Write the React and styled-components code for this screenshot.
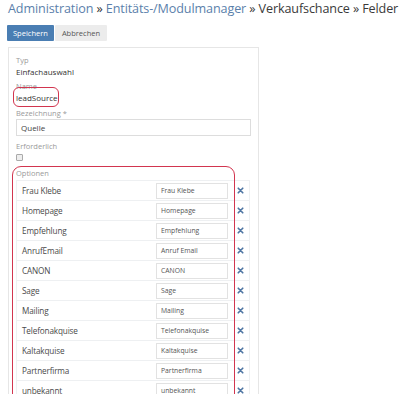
import React from "react";
import styled, { createGlobalStyle } from "styled-components";

const Global = createGlobalStyle`
  html, body { margin: 0; padding: 0; background: #fff; }
  body { font-family: "Open Sans", "Liberation Sans", sans-serif; color: #333; }
  * { box-sizing: border-box; }
`;

const Page = styled.div`
  padding: 1px 8px 0 8px;
  width: 403px;
  height: 394px;
  overflow: hidden;
`;

const Title = styled.h1`
  margin: 0;
  font-size: 12.6px;
  font-weight: 400;
  line-height: 16px;
  letter-spacing: -0.12px;
  white-space: nowrap;
`;

const Crumb = styled.span`
  color: ${(p) => (p.$link ? "#5b7fab" : "#3a3a3a")};
`;

const Toolbar = styled.div`
  display: flex;
  margin-top: 8px;
  margin-left: -1px;
`;

const Button = styled.button`
  font-family: inherit;
  font-size: 7.5px;
  height: 16px;
  padding: 0 ${(p) => (p.$primary ? "6px" : "7px")};
  border: none;
  border-radius: 1px;
  background: ${(p) => (p.$primary ? "#4a7eb3" : "#ececec")};
  color: ${(p) => (p.$primary ? "#fff" : "#555")};
  margin-right: 1px;
`;

const Panel = styled.div`
  position: relative;
  margin-top: 6px;
  width: 251px;
  height: 400px;
  border: 1px solid #e6e6e6;
  padding: 7px 7px 0 7px;
`;

const Field = styled.div`
  margin-bottom: ${(p) => p.$mb || 0}px;
`;

const Label = styled.div`
  font-size: 7.5px;
  line-height: 11px;
  color: #9a9a9a;
`;

const Value = styled.div`
  font-size: 8px;
  line-height: 11px;
  color: #333;
`;

const TextInput = styled.div`
  height: 17px;
  border: 1px solid #ddd;
  font-size: 8px;
  line-height: 15px;
  padding-left: 4px;
  color: #444;
  width: 235px;
`;

const Check = styled.div`
  width: 7px;
  height: 7px;
  border: 1px solid #aaa;
  background: #eee;
  border-radius: 1px;
  margin-top: 2px;
`;

const Table = styled.div`
  display: grid;
  grid-template-columns: 137px 78px 19px;
  width: 234px;
  margin-top: 1px;
`;

const Cell = styled.div`
  height: 20px;
  border-top: 1px solid #eef0f2;
  display: flex;
  align-items: center;
  justify-content: ${(p) => (p.$center ? "center" : "flex-start")};
  padding-left: ${(p) => (p.$pad ? 5 : 0)}px;
  font-size: 8.2px;
  letter-spacing: -0.15px;
  color: #4a4a4a;
  border-right: ${(p) => (p.$edge ? "1px solid #eef0f2" : "none")};
  border-left: ${(p) => (p.$first ? "1px solid #eef0f2" : "none")};
`;

const OptInput = styled.div`
  width: 72px;
  height: 16px;
  margin-left: 3px;
  border: 1px solid #e2e2e2;
  font-size: 6.8px;
  line-height: 14px;
  padding-left: 4px;
  letter-spacing: 0;
  color: #555;
`;

const Remove = styled.svg`
  width: 7px;
  height: 7px;
  margin-left: 1px;
`;

const Mark = styled.div`
  position: absolute;
  border: 1.3px solid #d2354f;
  border-radius: ${(p) => p.$r}px;
  left: ${(p) => p.$x}px;
  top: ${(p) => p.$y}px;
  width: ${(p) => p.$w}px;
  height: ${(p) => p.$h}px;
  pointer-events: none;
`;

const options = [
  ["Frau Klebe", "Frau Klebe"],
  ["Homepage", "Homepage"],
  ["Empfehlung", "Empfehlung"],
  ["AnrufEmail", "Anruf Email"],
  ["CANON", "CANON"],
  ["Sage", "Sage"],
  ["Mailing", "Mailing"],
  ["Telefonakquise", "Telefonakquise"],
  ["Kaltakquise", "Kaltakquise"],
  ["Partnerfirma", "Partnerfirma"],
  ["unbekannt", "unbekannt"],
];

const X = () => (
  <Remove viewBox="0 0 10 10">
    <path d="M1.8 1.8 L8.2 8.2 M8.2 1.8 L1.8 8.2" stroke="#4f76a3" strokeWidth="2.4" strokeLinecap="round" />
  </Remove>
);

export default function App() {
  return (
    <>
      <Global />
      <Page>
        <Title>
          <Crumb $link>Administration</Crumb> » <Crumb $link>Entitäts-/Modulmanager</Crumb>{" "}
          <Crumb>» Verkaufschance » Felder</Crumb>
        </Title>
        <Toolbar>
          <Button $primary>Speichern</Button>
          <Button>Abbrechen</Button>
        </Toolbar>
        <Panel>
          <Field $mb={4}>
            <Label>Typ</Label>
            <Value>Einfachauswahl</Value>
          </Field>
          <Field $mb={5}>
            <Label>Name</Label>
            <Value>leadSource</Value>
          </Field>
          <Field $mb={5}>
            <Label>Bezeichnung *</Label>
            <TextInput>Quelle</TextInput>
          </Field>
          <Field $mb={7}>
            <Label>Erforderlich</Label>
            <Check />
          </Field>
          <Field>
            <Label>Optionen</Label>
            <Table>
              {options.map(([name, label]) => (
                <React.Fragment key={name}>
                  <Cell $pad $first>{name}</Cell>
                  <Cell>
                    <OptInput>{label}</OptInput>
                  </Cell>
                  <Cell $center $edge>
                    <X />
                  </Cell>
                </React.Fragment>
              ))}
            </Table>
          </Field>
          <Mark $x={4} $y={39} $w={46} $h={20} $r={6} />
          <Mark $x={3} $y={118} $w={223} $h={300} $r={9} />
        </Panel>
      </Page>
    </>
  );
}
